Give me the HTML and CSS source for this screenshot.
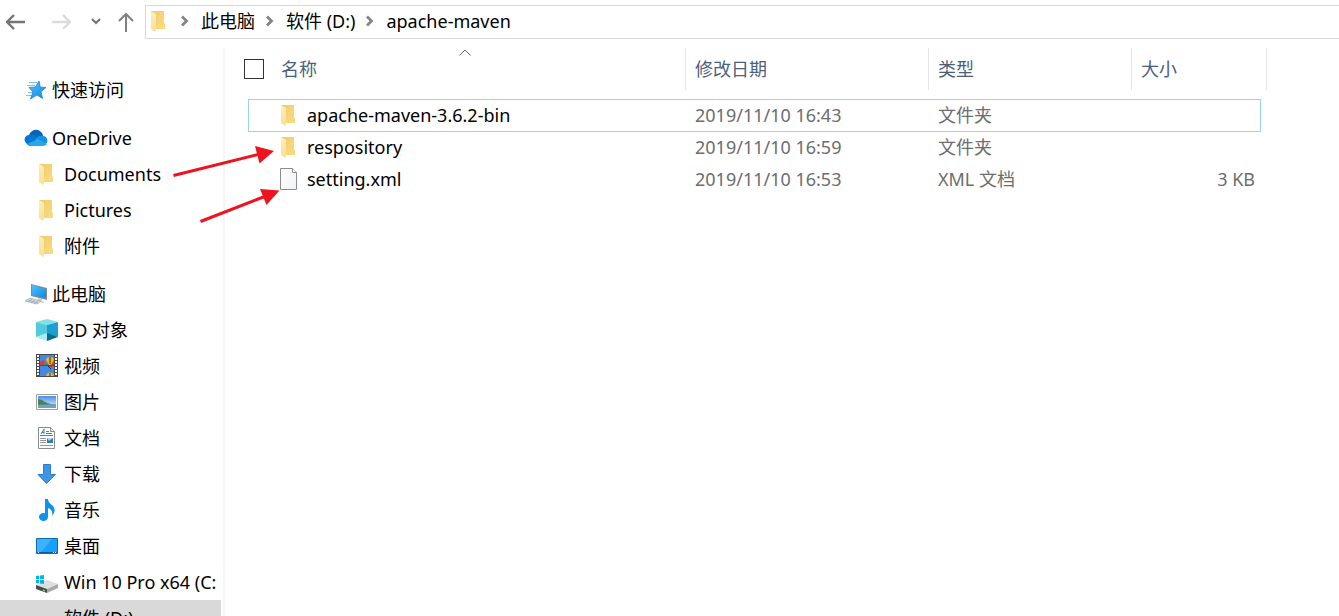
FILE: index.html
```
<!DOCTYPE html>
<html lang="zh-CN">
<head>
    <meta charset="UTF-8">
    <meta name="viewport" content="width=device-width, initial-scale=1.0">
    <title>apache-maven</title>
    <link rel="stylesheet" href="styles.css">
</head>
<body>
    <!-- Shared icons -->
    <svg class="sprite" aria-hidden="true">
        <defs>
            <linearGradient id="folderBack" x1="0" y1="0" x2="1" y2="1">
                <stop offset="0" stop-color="#f0cb69"/>
                <stop offset="1" stop-color="#fbdc83"/>
            </linearGradient>
            <linearGradient id="folderFront" x1="0" y1="0" x2="0" y2="1">
                <stop offset="0" stop-color="#ffeebb"/>
                <stop offset="1" stop-color="#fbdf8e"/>
            </linearGradient>
            <linearGradient id="sky" x1="0" y1="0" x2="0" y2="1">
                <stop offset="0" stop-color="#4a90e8"/>
                <stop offset="1" stop-color="#e4f4fc"/>
            </linearGradient>
            <linearGradient id="blue" x1="0" y1="0" x2="1" y2="1">
                <stop offset="0" stop-color="#4cc3fb"/>
                <stop offset="1" stop-color="#1187e0"/>
            </linearGradient>
            <linearGradient id="paper" x1="0" y1="0" x2="1" y2="1">
                <stop offset="0" stop-color="#ffffff"/>
                <stop offset="1" stop-color="#f0f2f4"/>
            </linearGradient>
        </defs>
        <symbol id="folder" viewBox="0 0 24 24">
            <path fill="url(#folderBack)" d="M3 2h13v12l1 1v5H5z"/>
            <path fill="url(#folderFront)" d="M3 2l5 3v16l-1 2-4-3z"/>
        </symbol>
        <symbol id="chevron" viewBox="0 0 11 12">
            <path fill="none" stroke="#858585" stroke-width="2.8" d="M2 1.500l4.500 4.500L2 10.500"/>
        </symbol>
    </svg>

    <header class="toolbar">
        <button class="nav-button back" type="button" aria-label="后退">
            <svg width="20" height="18" viewBox="0 0 20 18"><path fill="none" stroke="#757575" stroke-width="2.4" d="M19 9H1M8 2L1 9l7 7"/></svg>
        </button>
        <button class="nav-button forward" type="button" aria-label="前进" disabled>
            <svg width="20" height="18" viewBox="0 0 20 18"><path fill="none" stroke="#dcdcdc" stroke-width="2.4" d="M1 9h18M12 2l7 7-7 7"/></svg>
        </button>
        <button class="nav-button recent" type="button" aria-label="最近浏览的位置">
            <svg width="10" height="8" viewBox="0 0 10 8"><path fill="none" stroke="#757575" stroke-width="2.2" d="M1 1l4 4 4-4"/></svg>
        </button>
        <button class="nav-button up" type="button" aria-label="上移">
            <svg width="16" height="20" viewBox="0 0 16 20"><path fill="none" stroke="#808080" stroke-width="2" d="M8 20V2M1 9l7-7 7 7"/></svg>
        </button>
        <nav class="address" aria-label="地址栏">
            <svg class="icon"><use href="#folder"/></svg>
            <svg class="sep"><use href="#chevron"/></svg>
            <a href="#">此电脑</a>
            <svg class="sep"><use href="#chevron"/></svg>
            <a href="#">软件 (D:)</a>
            <svg class="sep"><use href="#chevron"/></svg>
            <a href="#">apache-maven</a>
        </nav>
    </header>

    <div class="explorer">
        <aside class="sidebar">
            <div class="group">
                <a class="item" href="#">
                    <svg class="icon" viewBox="0 0 24 24">
                        <path stroke="#7fc4f5" stroke-width="1.200" d="M5 4.500h8M3 7.500h8M4 14.500h6M2 17.500h6"/>
                        <path fill="url(#blue)" stroke="#1c86d1" stroke-width=".8" d="M15 3l1.200 6 5.800.5-5 4 1.500 7-5.500-3.500-6.500 4 2.500-7-4-4.500 6.500-.5z"/>
                    </svg>
                    快速访问
                </a>
            </div>
            <div class="group">
                <a class="item" href="#">
                    <svg class="icon cloud" viewBox="0 0 24 24">
                        <path fill="#0364b8" d="M5 9c2-5 8-7 12-3 1 1 2 2 2 4l-5 4z"/>
                        <path fill="#0078d4" d="M3 18c-4-3-3-9 3-9 3-1 5 0 8 3L6 20c-1 0-2-1-3-2z"/>
                        <path fill="#1490df" d="M12 13c2-4 4-4 7-3 4 0 5 4 4 7l-3 1z"/>
                        <path fill="#28a8ea" d="M3 18l11-5 9 5c-1 1-2 2-4 2H6c-1 0-2-1-3-2z"/>
                    </svg>
                    OneDrive
                </a>
                <a class="item child" href="#"><svg class="icon"><use href="#folder"/></svg>Documents</a>
                <a class="item child" href="#"><svg class="icon"><use href="#folder"/></svg>Pictures</a>
                <a class="item child" href="#"><svg class="icon"><use href="#folder"/></svg>附件</a>
            </div>
            <div class="group">
                <a class="item" href="#">
                    <svg class="icon" viewBox="0 0 24 24">
                        <path fill="#c9d0d6" d="M14 16l4 1v2l3 1-2 1-6-2z"/>
                        <path fill="#7b8b98" d="M7 2l16 4v12L7 14z"/>
                        <path fill="url(#blue)" d="M8 3l14 4v9L8 13z"/>
                        <path fill="#d4dade" stroke="#9ba7b0" stroke-width=".7" d="M6 16l11 3-4 3L1 19z"/>
                        <path stroke="#9ba7b0" stroke-width=".7" d="M4 18l10 3M8 17l-4 3M11 18l-4 3M14 19l-4 3"/>
                    </svg>
                    此电脑
                </a>
                <a class="item child" href="#">
                    <svg class="icon" viewBox="0 0 24 24">
                        <path fill="#7fe0e8" d="M0 4l11-3 11 3-11 3z"/>
                        <path fill="#50cbdc" d="M0 4l11 3v9L0 19z"/>
                        <path fill="#1a9fd0" d="M22 4L11 7v9l11 3z"/>
                        <path fill="#a6ecf0" d="M0 19l11-4v8z"/>
                        <path fill="#086d84" d="M22 19l-11-4v8z"/>
                    </svg>
                    3D 对象
                </a>
                <a class="item child" href="#">
                    <svg class="icon" viewBox="0 0 24 24">
                        <path fill="#4a4a4a" d="M0 0h22v23H0z"/>
                        <path fill="#4289e6" d="M4 1h14v10H4zM4 12h14v10H4z"/>
                        <path fill="#d33c43" d="M4 8l3-2 4 5H4zM12 12h5l-2 2zM15 7l3-1v5h-4z"/>
                        <path fill="#3c9b4a" d="M8 9h4v2H8z"/>
                        <path fill="#f3b41b" d="M10 6a4 3 0 0 1 8 0l-3 5h-2zM10 22c0-4 7-5 8 0z"/>
                        <path stroke="#28315a" d="M14 3v7M14 19v3M12 12l3 3"/>
                        <path stroke="#fff" stroke-width="2" stroke-dasharray="2 1" d="M2 1v21M20 1v21"/>
                    </svg>
                    视频
                </a>
                <a class="item child" href="#">
                    <svg class="icon" viewBox="0 0 24 24">
                        <path fill="#fff" stroke="#a0a0a0" d="M.5 4.500h21v15H.5z"/>
                        <path fill="url(#sky)" d="M2 6h18v12H2z"/>
                        <path fill="#4c8060" d="M2 9c4 0 7 4 13 5l5 1H2z"/>
                        <path fill="#6fa3bd" d="M2 15l18-1v4H2z"/>
                    </svg>
                    图片
                </a>
                <a class="item child" href="#">
                    <svg class="icon" viewBox="0 0 24 24">
                        <path fill="#fff" stroke="#8b8b8b" d="M2.500 1.500h12l4 4v17h-16z"/>
                        <path fill="#e8e8e8" stroke="#8b8b8b" d="M14.500 1.500v4h4"/>
                        <path fill="none" stroke="#258bd4" d="M5 8l3-5v5M6 6.500h2M10 5.500h3M10 7.500h6M4 9.500h13"/>
                        <path stroke="#999" d="M4 12.500h6M4 14.500h6M4 16.500h6M4 19.500h13"/>
                        <path fill="#347bad" d="M11 12h6v5h-6z"/>
                        <path fill="#a9d6f0" d="M11 12h6l-4 3z"/>
                    </svg>
                    文档
                </a>
                <a class="item child" href="#">
                    <svg class="icon" viewBox="0 0 24 24">
                        <path fill="#3c96e8" stroke="#2c7fca" d="M7.500 2.500h7v10h5l-9 9-8.500-9h5.500z"/>
                    </svg>
                    下载
                </a>
                <a class="item child" href="#">
                    <svg class="icon" viewBox="0 0 24 24">
                        <ellipse cx="7.500" cy="19" rx="4.500" ry="4" fill="#0d93ee"/>
                        <path fill="#0d93ee" d="M9 1h3c0 6 9 6 6 14l-2 3c1-5-1-7-4-8v9H9z"/>
                    </svg>
                    音乐
                </a>
                <a class="item child" href="#">
                    <svg class="icon" viewBox="0 0 24 24">
                        <path fill="#18a0fb" stroke="#0b6cb5" d="M.5 4.500h21v15H.5z"/>
                        <path fill="#3eb1ff" d="M1 5h15L5 18H1z"/>
                        <path fill="#0b5c9c" d="M1 18h20v1H1z"/>
                        <path stroke="#fff" d="M2 18.500h1M17 18.500h1M19 18.500h1"/>
                    </svg>
                    桌面
                </a>
                <a class="item child" href="#">
                    <svg class="icon" viewBox="0 0 24 24">
                        <path fill="#dedede" d="M0 15l11-5 11 4-11 5z"/>
                        <path fill="#4a4a4a" d="M0 15l11 4v4L0 19z"/>
                        <path fill="#a9a9a9" d="M22 14l-11 5v4l11-5z"/>
                        <path stroke="#5be36a" stroke-width="1.500" d="M7 20l2 1"/>
                        <path fill="#00b4f0" d="M0 6l3-.5V9H0zM4 5.500L8 5v4H4zM0 10h3v3.500L0 13zM4 10h4v4l-4-.5z"/>
                    </svg>
                    Win 10 Pro x64 (C:
                </a>
                <a class="item child selected" href="#">
                    <svg class="icon" viewBox="0 0 24 24">
                        <path fill="#dedede" d="M0 18l11-3 11 3-11 3z"/>
                        <path fill="#777" d="M0 18l11 3 11-3v2l-11 3-11-3z"/>
                    </svg>
                    软件 (D:)
                </a>
            </div>
        </aside>

        <main class="content">
            <table class="files">
                <colgroup>
                    <col>
                    <col class="col-date">
                    <col class="col-type">
                    <col class="col-size">
                    <col class="col-end">
                </colgroup>
                <thead>
                    <tr>
                        <th>
                            <svg class="sort" viewBox="0 0 12 7"><path fill="none" stroke="#666" d="M.5 6.500L6 1l5.500 5.500"/></svg>
                            <div class="name-head">
                                <input type="checkbox" id="selectAll">
                                <label for="selectAll">名称</label>
                            </div>
                        </th>
                        <th>修改日期</th>
                        <th>类型</th>
                        <th colspan="2">大小</th>
                    </tr>
                </thead>
                <tbody>
                    <tr class="focused">
                        <td><a class="file" href="#"><svg class="icon"><use href="#folder"/></svg>apache-maven-3.6.2-bin</a></td>
                        <td>2019/11/10 16:43</td>
                        <td>文件夹</td>
                        <td class="size"></td>
                    </tr>
                    <tr>
                        <td><a class="file" href="#"><svg class="icon"><use href="#folder"/></svg>respository</a></td>
                        <td>2019/11/10 16:59</td>
                        <td>文件夹</td>
                        <td class="size"></td>
                    </tr>
                    <tr>
                        <td>
                            <a class="file" href="#">
                                <svg class="icon" viewBox="0 0 24 24">
                                    <path fill="url(#paper)" stroke="#8a8d90" d="M2.500 1.500h12l4 4v17h-16z"/>
                                    <path fill="#fff" stroke="#8a8d90" d="M14.500 1.500v4h4"/>
                                </svg>
                                setting.xml
                            </a>
                        </td>
                        <td>2019/11/10 16:53</td>
                        <td>XML 文档</td>
                        <td class="size">3 KB</td>
                    </tr>
                </tbody>
            </table>
        </main>
    </div>

    <!-- Arrows pointing at the repository folder and the settings file -->
    <svg class="arrows" width="110" height="80" viewBox="172 145 110 80" aria-hidden="true">
        <path stroke="#ed1420" stroke-width="3" d="M173.500 175.500L260 154M200.500 221.500L266 196"/>
        <path fill="#ed1420" d="M255 146l19 5-14.500 12.500zM260 189l19.500 1.500L266.500 205z"/>
    </svg>
</body>
</html>
```

FILE: styles.css
```
* {
    box-sizing: border-box;
}

body {
    margin: 0;
    height: 100vh;
    display: flex;
    flex-direction: column;
    overflow: hidden;
    background: #fff;
    color: #000;
    font-family: "Noto Sans", "Noto Sans CJK SC", sans-serif;
    font-size: 18px;
    line-height: 24px;
}

a {
    color: inherit;
    text-decoration: none;
}

svg {
    display: block;
    flex: none;
}

.sprite {
    position: absolute;
    width: 0;
    height: 0;
}

.icon {
    width: 24px;
    height: 24px;
}

/* Toolbar */
.toolbar {
    display: flex;
    align-items: center;
    flex: none;
    padding-top: 5px;
}

.nav-button {
    display: flex;
    align-items: center;
    justify-content: center;
    height: 34px;
    padding: 0;
    border: none;
    background: none;
}

.back {
    width: 32px;
}

.forward {
    width: 58px;
}

.recent {
    width: 11px;
}

.up {
    width: 44px;
    padding-left: 5px;
}

.address {
    display: flex;
    align-items: center;
    flex: 1;
    gap: 10px;
    height: 34px;
    padding: 0 0 2px 2px;
    border: 1px solid #d9d9d9;
    border-right: none;
    white-space: nowrap;
}

.address .icon {
    margin-right: -2px;
}

.sep {
    width: 11px;
    height: 12px;
}

/* Main area */
.explorer {
    display: flex;
    flex: 1;
    min-height: 0;
    padding-top: 8px;
}

.sidebar {
    width: 225px;
    flex: none;
    padding-top: 25px;
    border-right: 2px solid #f5f5f5;
    overflow: hidden;
}

.group {
    margin-bottom: 12px;
}

.item {
    display: flex;
    align-items: center;
    gap: 4px;
    height: 36px;
    padding-left: 24px;
    white-space: nowrap;
}

.child {
    padding-left: 36px;
}

.selected {
    margin-right: 2px;
    background: #d9d9d9;
}

.content {
    flex: 1;
    padding: 1px 72px 0 23px;
}

/* File list */
.files {
    width: 100%;
    table-layout: fixed;
    border-spacing: 0;
}

.col-date {
    width: 243px;
}

.col-type {
    width: 203px;
}

.col-size {
    width: 129px;
}

.col-end {
    width: 6px;
}

.files th {
    position: relative;
    height: 42px;
    padding: 0 0 1px 9px;
    border-right: 1px solid #e5e5e5;
    color: #4c607a;
    font-weight: normal;
    text-align: left;
}

.files th:first-child {
    padding-left: 0;
}

.sort {
    position: absolute;
    top: 1px;
    left: calc(50% - 8px);
    width: 12px;
    height: 7px;
}

.name-head {
    display: flex;
    align-items: center;
    gap: 17px;
    margin-left: -4px;
}

.name-head input {
    appearance: none;
    width: 20px;
    height: 20px;
    margin: 0;
    border: 1px solid #333;
    background: #fff;
}

.name-head input:checked {
    background: #0078d7;
}

.files tbody::before {
    content: "";
    display: block;
    height: 9px;
}

.files td {
    height: 32px;
    padding: 0 0 2px 9px;
    color: #6d6d6d;
    white-space: nowrap;
}

.files td:first-child {
    padding-left: 30px;
}

.files .size {
    padding-right: 6px;
    text-align: right;
}

.focused td {
    height: 33px;
    border-top: 1px solid #99d1ff;
    border-bottom: 1px solid #99d1ff;
}

.focused td:first-child {
    padding-left: 29px;
    border-left: 1px solid #99d1ff;
}

.focused td:last-child {
    border-right: 1px solid #99d1ff;
}

.file {
    display: flex;
    align-items: center;
    gap: 5px;
    color: #000;
}

.arrows {
    position: absolute;
    top: 145px;
    left: 172px;
}
```
